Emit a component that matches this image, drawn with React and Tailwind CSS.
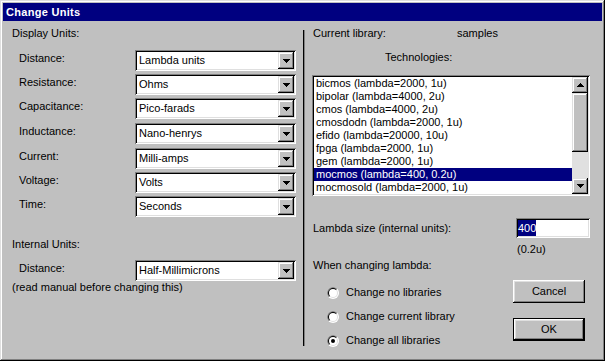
import React from "react";

const raised = "shadow-[inset_-1px_-1px_#000,inset_1px_1px_#dfdfdf,inset_-2px_-2px_#808080,inset_2px_2px_#fff]";
const sunken = "shadow-[inset_1px_1px_#808080,inset_-1px_-1px_#fff,inset_2px_2px_#000,inset_-2px_-2px_#dfdfdf]";

const displayUnits = [
  { label: "Distance:", value: "Lambda units", gap: "mt-0" },
  { label: "Resistance:", value: "Ohms", gap: "mt-[3px]" },
  { label: "Capacitance:", value: "Pico-farads", gap: "mt-[3px]" },
  { label: "Inductance:", value: "Nano-henrys", gap: "mt-[4px]" },
  { label: "Current:", value: "Milli-amps", gap: "mt-[4px]" },
  { label: "Voltage:", value: "Volts", gap: "mt-[3px]" },
  { label: "Time:", value: "Seconds", gap: "mt-[3px]" },
];

const technologies = [
  "bicmos (lambda=2000, 1u)",
  "bipolar (lambda=4000, 2u)",
  "cmos (lambda=4000, 2u)",
  "cmosdodn (lambda=2000, 1u)",
  "efido (lambda=20000, 10u)",
  "fpga (lambda=2000, 1u)",
  "gem (lambda=2000, 1u)",
  "mocmos (lambda=400, 0.2u)",
  "mocmosold (lambda=2000, 1u)",
];

const radios = ["Change no libraries", "Change current library", "Change all libraries"];

function Arrow({ up = false }) {
  return (
    <svg width="7" height="4" viewBox="0 0 7 4" shapeRendering="crispEdges" className={up ? "rotate-180" : ""}>
      <rect x="0" y="0" width="7" height="1" fill="#000" />
      <rect x="1" y="1" width="5" height="1" fill="#000" />
      <rect x="2" y="2" width="3" height="1" fill="#000" />
      <rect x="3" y="3" width="1" height="1" fill="#000" />
    </svg>
  );
}

function Combo({ value }) {
  return (
    <div className={`w-[161px] h-[21px] p-[2px] bg-white flex ${sunken}`}>
      <div className="flex-1 pl-[2px] leading-[17px] text-black">{value}</div>
      <div className={`w-[16px] h-full bg-[#c0c0c0] flex items-center justify-center ${raised}`}>
        <Arrow />
      </div>
    </div>
  );
}

function Radio({ checked }) {
  return (
    <svg width="12" height="12" viewBox="0 0 12 12">
      <circle cx="6" cy="6" r="6" fill="#fff" />
      <path d="M1.757 10.243 A6 6 0 0 1 10.243 1.757 Z" fill="#808080" />
      <circle cx="6" cy="6" r="5" fill="#dfdfdf" />
      <path d="M2.464 9.536 A5 5 0 0 1 9.536 2.464 Z" fill="#000" />
      <circle cx="6" cy="6" r="4" fill="#fff" />
      {checked && <circle cx="6" cy="6" r="2" fill="#000" />}
    </svg>
  );
}

export default function App() {
  return (
    <div className={`w-[605px] h-[361px] p-[3px] bg-[#c0c0c0] flex flex-col text-[11px] text-black font-['Liberation_Sans',Arial,sans-serif] ${raised}`}>
      <div className="h-[18px] bg-[#000080] text-white font-bold leading-[18px] pl-[3px] tracking-[0.3px]">Change Units</div>

      <div className="flex-1 flex">
        {/* left: display units */}
        <div className="w-[300px] flex flex-col">
          <div className="pt-[6px] pl-[9px] leading-[13px]">Display Units:</div>
          <div className="mt-[10px] flex flex-col">
            {displayUnits.map(row => (
              <div key={row.label} className={`flex items-start pl-[16px] ${row.gap}`}>
                <div className="w-[116px] pt-[2px] leading-[13px]">{row.label}</div>
                <Combo value={row.value} />
              </div>
            ))}
          </div>
          <div className="mt-[21px] pl-[9px] leading-[13px]">Internal Units:</div>
          <div className="mt-[9px] flex items-start pl-[16px]">
            <div className="w-[116px] pt-[2px] leading-[13px]">Distance:</div>
            <Combo value="Half-Millimicrons" />
          </div>
          <div className="pl-[9px] leading-[13px]">(read manual before changing this)</div>
        </div>

        <div className="w-[2px] mt-[9px] mb-[12px] border-l border-black bg-[#808080]" />

        {/* right: technology / lambda */}
        <div className="flex-1 flex flex-col">
          <div className="pt-[6px] pl-[8px] flex leading-[13px]">
            <div className="w-[144px]">Current library:</div>
            <div>samples</div>
          </div>
          <div className="mt-[11px] pl-[80px] leading-[13px]">Technologies:</div>

          <div className={`mt-[11px] ml-[7px] w-[278px] h-[121px] p-[2px] bg-white flex ${sunken}`}>
            <div className="flex-1 flex flex-col">
              {technologies.map((t, i) => (
                <div key={t} className={`h-[13px] leading-[13px] pl-[2px] whitespace-nowrap ${i === 7 ? "bg-[#000080] text-white" : ""}`}>{t}</div>
              ))}
            </div>
            <div className="w-[16px] flex flex-col">
              <div className={`h-[16px] bg-[#c0c0c0] flex items-center justify-center ${raised}`}><Arrow up /></div>
              <div className={`h-[59px] bg-[#c0c0c0] ${raised}`} />
              <div className="flex-1 bg-[#e0e0e0]" />
              <div className={`h-[16px] bg-[#c0c0c0] flex items-center justify-center ${raised}`}><Arrow /></div>
            </div>
          </div>

          <div className="mt-[22px] flex items-center pl-[8px]">
            <div className="w-[203px] leading-[13px]">Lambda size (internal units):</div>
            <div className={`w-[74px] h-[20px] p-[2px] bg-white flex items-center ${sunken}`}>
              <span className="bg-[#000080] text-white leading-[16px]">400</span>
            </div>
          </div>
          <div className="mt-[5px] pl-[212px] leading-[13px]">(0.2u)</div>
          <div className="mt-[3px] pl-[8px] leading-[13px]">When changing lambda:</div>

          <div className="flex">
            <div className="mt-[14px] pl-[22px] flex flex-col gap-[11px]">
              {radios.map((r, i) => (
                <div key={r} className="h-[13px] flex items-center gap-[7px] leading-[13px]">
                  <Radio checked={i === 2} />
                  <span>{r}</span>
                </div>
              ))}
            </div>
            <div className="ml-auto mr-[17px] mt-[8px] flex flex-col gap-[15px]">
              <button className={`w-[72px] h-[23px] bg-[#c0c0c0] text-black text-center leading-[23px] shadow-[inset_-1px_-1px_#000,inset_1px_1px_#fff,inset_-2px_-2px_#808080,inset_2px_2px_#dfdfdf]`}>Cancel</button>
              <button className="w-[72px] h-[23px] bg-[#c0c0c0] text-black text-center leading-[21px] border border-black shadow-[inset_-1px_-1px_#000,inset_1px_1px_#fff,inset_-2px_-2px_#808080,inset_2px_2px_#dfdfdf]">OK</button>
            </div>
          </div>
        </div>
      </div>
    </div>
  );
}
